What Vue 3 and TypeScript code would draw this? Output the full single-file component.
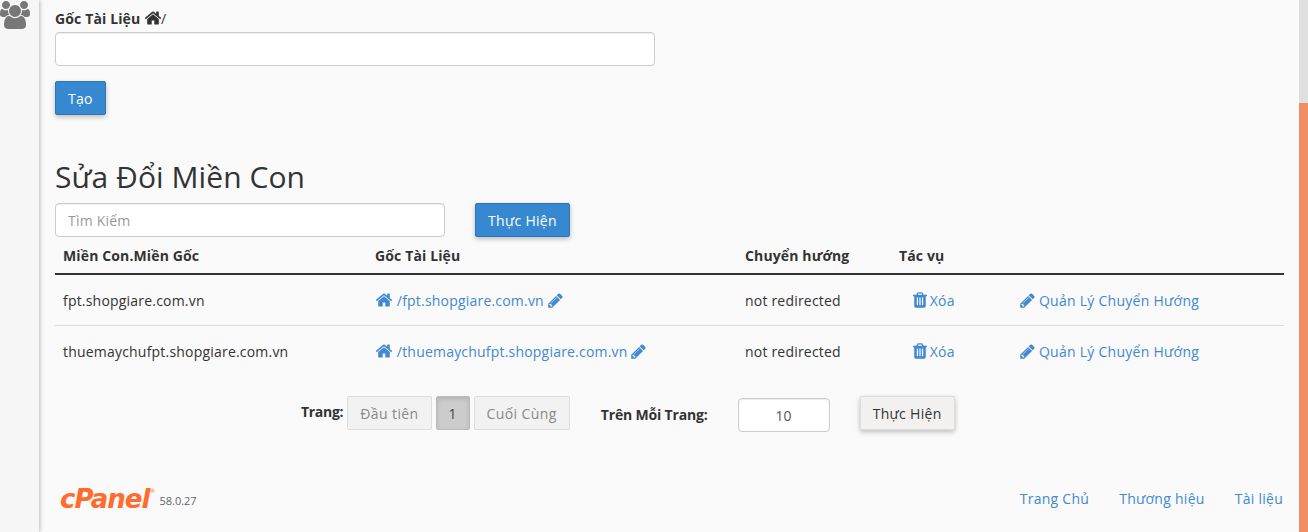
<script setup lang="ts">
interface Row { domain: string; root: string }
const rows: Row[] = [
  { domain: 'fpt.shopgiare.com.vn', root: '/fpt.shopgiare.com.vn' },
  { domain: 'thuemaychufpt.shopgiare.com.vn', root: '/thuemaychufpt.shopgiare.com.vn' },
]
const home = 'M1472 992v480q0 26-19 45t-45 19h-384v-384h-256v384h-384q-26 0-45-19t-19-45v-480q0-1 .5-3t.5-3l575-474 575 474q1 2 1 6zm223-69l-62 74q-8 9-21 11h-3q-13 0-21-7l-692-577-692 577q-12 8-24 7-13-2-21-11l-62-74q-8-10-7-23.500t11-21.500l719-599q32-26 76-26t76 26l244 204v-195q0-14 9-23t23-9h192q14 0 23 9t9 23v408l219 182q10 8 11 21.500t-7 23.500z'
const pencil = 'M491 1536l91-91-235-235-91 91v107h128v128h107zm523-928q0-22-22-22-10 0-17 7l-542 542q-7 7-7 17 0 22 22 22 10 0 17-7l542-542q7-7 7-17zm-54-192l416 416-832 832h-416v-416zm683 96q0 53-37 90l-166 166-416-416 166-165q36-38 90-38 53 0 91 38l235 234q37 39 37 91z'
const trash = 'M704 1376v-704q0-14-9-23t-23-9h-64q-14 0-23 9t-9 23v704q0 14 9 23t23 9h64q14 0 23-9t9-23zm256 0v-704q0-14-9-23t-23-9h-64q-14 0-23 9t-9 23v704q0 14 9 23t23 9h64q14 0 23-9t9-23zm256 0v-704q0-14-9-23t-23-9h-64q-14 0-23 9t-9 23v704q0 14 9 23t23 9h64q14 0 23-9t9-23zm-544-992h448l-48-117q-7-9-17-11h-317q-10 2-17 11zm928 32v64q0 14-9 23t-23 9h-96v948q0 83-47 143.500t-113 60.500h-832q-66 0-113-58.500t-47-141.500v-952h-96q-14 0-23-9t-9-23v-64q0-14 9-23t23-9h309l70-167q15-37 54-63t79-26h320q40 0 79 26t54 63l70 167h309q14 0 23 9t9 23z'
const users = 'M593 896q-162 5-265 128h-134q-82 0-138-40.500t-56-118.500q0-353 124-353 6 0 43.500 21t97.500 42.500 119 21.500q67 0 133-23-5 37-5 66 0 139 81 256zm1071 637q0 120-73 189.500t-194 69.500h-874q-121 0-194-69.500t-73-189.500q0-53 3.500-103.500t14-109 26.500-108.500 43-97.500 62-81 85.500-53.500 111.500-20q10 0 43 21.500t73 48 107 48 135 21.500 135-21.500 107-48 73-48 43-21.500q61 0 111.500 20t85.500 53.500 62 81 43 97.500 26.500 108.500 14 109 3.500 103.500zm-1024-1277q0 106-75 181t-181 75-181-75-75-181 75-181 181-75 181 75 75 181zm704 384q0 159-112.500 271.500t-271.500 112.500-271.500-112.500-112.500-271.500 112.500-271.500 271.500-112.500 271.500 112.500 112.500 271.500zm576 225q0 78-56 118.500t-138 40.500h-134q-103-123-265-128 81-117 81-256 0-29-5-66 66 23 133 23 59 0 119-21.500t97.500-42.500 43.500-21q124 0 124 353zm-128-609q0 106-75 181t-181 75-181-75-75-181 75-181 181-75 181 75 75 181z'
</script>

<template>
  <div class="page">
    <aside class="side">
      <svg class="users" viewBox="0 0 1920 1792"><path :d="users" /></svg>
    </aside>

    <main class="main">
      <label class="field-label">Gốc Tài Liệu <svg class="i-label" viewBox="0 0 1792 1792"><path :d="home" /></svg><span class="slash">/</span></label>
      <input class="input wide" type="text" />
      <button class="btn primary create"><span class="btn-text">Tạo</span></button>

      <h2 class="title">Sửa Đổi Miền Con</h2>

      <div class="search">
        <input class="input narrow" type="text" placeholder="Tìm Kiếm" />
        <button class="btn primary"><span class="btn-text">Thực Hiện</span></button>
      </div>

      <table class="table">
        <colgroup>
          <col class="c1" /><col class="c2" /><col class="c3" /><col class="c4" /><col />
        </colgroup>
        <thead>
          <tr>
            <th>Miền Con.Miền Gốc</th>
            <th>Gốc Tài Liệu</th>
            <th>Chuyển hướng</th>
            <th colspan="2">Tác vụ</th>
          </tr>
        </thead>
        <tbody>
          <tr v-for="r in rows" :key="r.domain">
            <td>{{ r.domain }}</td>
            <td>
              <a class="link"><svg class="i-home" viewBox="0 0 1792 1792"><path :d="home" /></svg> {{ r.root }} <svg class="i-pen" viewBox="0 0 1792 1792"><path :d="pencil" /></svg></a>
            </td>
            <td>not redirected</td>
            <td class="del">
              <a class="link"><svg class="i-trash" viewBox="0 0 1792 1792"><path :d="trash" /></svg> Xóa</a>
            </td>
            <td>
              <a class="link manage"><svg class="i-pen" viewBox="0 0 1792 1792"><path :d="pencil" /></svg> Quản Lý Chuyển Hướng</a>
            </td>
          </tr>
        </tbody>
      </table>

      <div class="pager">
        <strong class="pg-label">Trang:</strong>
        <span class="pg">Đầu tiên</span>
        <span class="pg cur">1</span>
        <span class="pg">Cuối Cùng</span>
        <strong class="per-label">Trên Mỗi Trang:</strong>
        <input class="input per" type="text" value="10" />
        <button class="btn light"><span class="btn-text">Thực Hiện</span></button>
      </div>

      <footer class="foot">
        <div class="brand">
          <span class="logo">cPanel<sup>®</sup></span>
          <span class="ver">58.0.27</span>
        </div>
        <nav class="links">
          <a class="link">Trang Chủ</a>
          <a class="link">Thương hiệu</a>
          <a class="link">Tài liệu</a>
        </nav>
      </footer>
    </main>

    <div class="scroll">
      <div class="track"></div>
      <div class="thumb"></div>
    </div>
  </div>
</template>

<style scoped>
.page {
  display: flex;
  width: 1308px;
  height: 532px;
  overflow: hidden;
  background: #fafafa;
  color: #333;
  font-family: "Open Sans", sans-serif;
  font-size: 14px;
  line-height: 20px;
  letter-spacing: 0.2px;
}
.side {
  flex: 0 0 39px;
  background: #f6f6f6;
  box-shadow: 1px 0 4px rgba(0, 0, 0, 0.25);
  z-index: 1;
}
.users {
  display: block;
  width: 30px;
  height: 28px;
  margin-top: 1px;
  fill: #777;
}
.main {
  flex: 1;
  min-width: 0;
  padding: 9px 15px 0 16px;
  display: flex;
  flex-direction: column;
  align-items: flex-start;
}
.field-label {
  font-weight: 700;
  height: 23px;
  letter-spacing: 0.13px;
}
.slash { font-weight: 400; }
.i-label {
  width: 18px;
  height: 18px;
  fill: #333;
  vertical-align: -3px;
  margin-left: 0;
  margin-right: -1px;
}
.input {
  box-sizing: border-box;
  height: 34px;
  padding: 6px 12px;
  border: 1px solid #ccc;
  border-radius: 4px;
  background: #fff;
  color: #555;
  font: inherit;
  letter-spacing: 0.2px;
  box-shadow: inset 0 1px 1px rgba(0, 0, 0, 0.075);
}
.input::placeholder { color: #999; opacity: 1; }
.wide { width: 600px; }
.narrow { width: 390px; }
.btn {
  box-sizing: border-box;
  height: 34px;
  padding: 6px 12px;
  border: 1px solid;
  border-radius: 2px;
  font: inherit;
  letter-spacing: 0.3px;
  box-shadow: 0 2px 5px rgba(0, 0, 0, 0.25);
}
.btn-text {
  display: block;
  padding-top: 1px;
  margin-bottom: -1px;
}
.primary {
  background: #3689d0;
  border-color: #2e75b3;
  color: #fff;
}
.light {
  background: #f2f1f0;
  border-color: #ddd;
  color: #333;
}
.create { margin-top: 15px; }
.title {
  margin: 43px 0 0;
  font-size: 30px;
  font-weight: 400;
  letter-spacing: 0.07px;
  line-height: 38px;
  height: 45px;
}
.search {
  display: flex;
  gap: 30px;
}
.table {
  width: 1229px;
  margin-top: 2px;
  border-collapse: collapse;
  table-layout: fixed;
}
.c1 { width: 312px; }
.c2 { width: 370px; }
.c3 { width: 154px; }
.c4 { width: 121px; }
th {
  height: 35px;
  padding: 0 8px;
  box-sizing: border-box;
  border-bottom: 2px solid #333;
  text-align: left;
  font-weight: 700;
  letter-spacing: 0.13px;
}
td {
  height: 51px;
  padding: 2px 8px 0;
  box-sizing: border-box;
  border-bottom: 1px solid #ddd;
}
tbody tr:last-child td { border-bottom: 0; }
.del { padding-left: 22px; }
.link {
  color: #4189d0;
  text-decoration: none;
}
.i-home {
  width: 18px;
  height: 18px;
  fill: #4189d0;
  vertical-align: -3px;
}
.i-pen {
  width: 17px;
  height: 17px;
  fill: #4189d0;
  vertical-align: -3px;
  margin-left: -1px;
}
.manage { letter-spacing: 0.27px; }
.manage .i-pen { margin-right: -1px; }
.i-trash {
  width: 18px;
  height: 18px;
  fill: #4189d0;
  vertical-align: -3px;
  margin: 0 -3px 0 -2px;
}
.pager {
  display: flex;
  align-items: flex-start;
  margin-top: 20px;
  margin-left: 246px;
}
.pg-label {
  margin: 6px 4px 0 0;
  letter-spacing: -0.3px;
}
.pg {
  box-sizing: border-box;
  height: 34px;
  padding: 7px 12px 0;
  margin-right: 4px;
  background: #f2f2f2;
  border: 1px solid #ddd;
  border-radius: 2px;
  color: #888;
  letter-spacing: 0.4px;
}
.cur {
  background: #ccc;
  border-color: #bbb;
  color: #444;
  letter-spacing: 0;
  box-shadow: inset 0 2px 4px rgba(0, 0, 0, 0.12);
}
.per-label {
  margin: 9px 30px 0 27px;
  letter-spacing: -0.17px;
}
.per {
  width: 92px;
  text-align: center;
  margin: 2px 30px 0 0;
}
.foot {
  align-self: stretch;
  margin-top: auto;
  height: 45px;
  display: flex;
  justify-content: space-between;
  align-items: flex-start;
  padding: 0 1px 0 5px;
}
.brand { display: flex; align-items: flex-start; }
.logo {
  color: #ff6c2c;
  font-family: "DejaVu Sans", sans-serif;
  font-size: 26px;
  font-weight: 700;
  font-style: italic;
  line-height: 24px;
  letter-spacing: -1px;
}
.logo sup {
  font-size: 6px;
  font-weight: 400;
  vertical-align: 15px;
  line-height: 0;
}
.ver {
  margin: 4px 0 0 5px;
  color: #666;
  font-size: 11px;
  letter-spacing: 0;
}
.links {
  display: flex;
  gap: 30px;
  padding-top: 2px;
  letter-spacing: 0.27px;
}
.scroll {
  flex: 0 0 9px;
  display: flex;
  flex-direction: column;
}
.track { height: 103px; background: #e0e0e0; }
.thumb { flex: 1; background: #f28c64; }
</style>
